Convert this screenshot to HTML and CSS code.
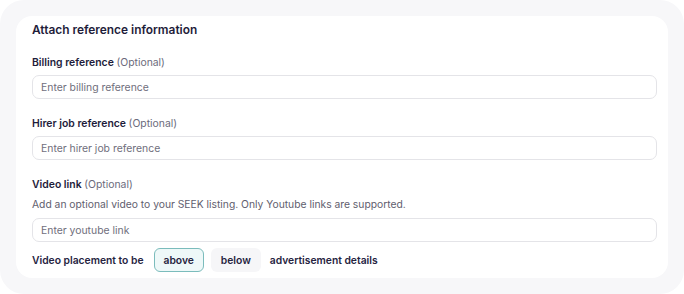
FILE: index.html
```html
<!DOCTYPE html>
<html lang="en">
<head>
    <meta charset="UTF-8">
    <meta name="viewport" content="width=device-width, initial-scale=1.0">
    <title>Attach reference information</title>
    <link rel="stylesheet" href="styles.css">
</head>
<body>
    <div class="panel">
        <div class="card">
            <h3>Attach reference information</h3>

            <div class="field">
                <label for="billingRef">Billing reference <span class="optional">(Optional)</span></label>
                <input type="text" id="billingRef" placeholder="Enter billing reference">
            </div>

            <div class="field">
                <label for="hirerRef">Hirer job reference <span class="optional">(Optional)</span></label>
                <input type="text" id="hirerRef" placeholder="Enter hirer job reference">
            </div>

            <div class="field">
                <label for="videoLink">Video link <span class="optional">(Optional)</span></label>
                <p class="hint">Add an optional video to your SEEK listing. Only Youtube links are supported.</p>
                <input type="text" id="videoLink" placeholder="Enter youtube link">
            </div>

            <div class="placement">
                <span>Video placement to be</span>
                <button class="btn-option active">above</button>
                <button class="btn-option">below</button>
                <span>advertisement details</span>
            </div>
        </div>
    </div>
</body>
</html>
```

FILE: styles.css
```css
body {
    margin: 0;
    background-color: #ffffff;
    font-family: Inter, 'Noto Sans', sans-serif;
    color: #1e1c3a;
}
.panel {
    width: 684px;
    height: 294px;
    box-sizing: border-box;
    padding: 16px;
    background-color: #f7f7f9;
    border-radius: 24px;
}
.card {
    background-color: #ffffff;
    border-radius: 16px;
    height: 262px;
    box-sizing: border-box;
    padding: 4px 11px 6px 16px;
}
.card h3 {
    margin: 0;
    font-size: 11.9px;
    font-weight: 600;
    line-height: 20px;
}
.field {
    margin-top: 15px;
}
.field + .field {
    margin-top: 17px;
}
label {
    display: block;
    font-size: 10.4px;
    font-weight: 600;
    line-height: 16px;
    margin-bottom: 4px;
}
.optional {
    font-weight: 400;
    color: #6b6a7b;
}
.hint {
    margin: -1px 0 6px;
    font-size: 10.3px;
    line-height: 16px;
    color: #5f5e6e;
}
input[type="text"] {
    display: block;
    width: 100%;
    height: 24px;
    box-sizing: border-box;
    padding: 0 8px;
    border: 1px solid #e4e4e8;
    border-radius: 7px;
    font-family: inherit;
    font-size: 10.4px;
    color: #1e1c3a;
    background-color: #ffffff;
}
input::placeholder {
    color: #6f6e7c;
}
input:focus {
    outline: none;
    border-color: #7bbcbc;
}
.placement {
    display: flex;
    align-items: center;
    gap: 7px;
    margin-top: 6px;
    font-size: 10.3px;
    font-weight: 600;
    color: #26243f;
}
.placement span:first-child {
    margin-right: 3px;
}
.placement span:last-child {
    margin-left: 2px;
}
.btn-option {
    height: 24px;
    padding: 0 9px;
    border: 1px solid transparent;
    border-radius: 6px;
    background-color: #f6f6f8;
    font-family: inherit;
    font-size: 10.3px;
    font-weight: 600;
    color: #26243f;
    cursor: pointer;
}
.btn-option.active {
    border-color: #7bbcbc;
    background-color: #eef8f8;
}
```
